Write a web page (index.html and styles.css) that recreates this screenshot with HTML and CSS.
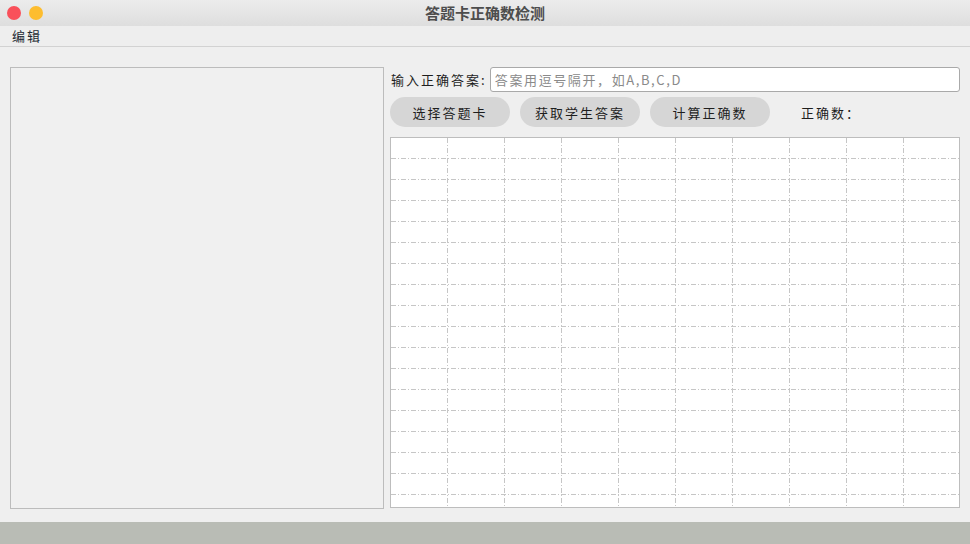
FILE: index.html
```html
<!DOCTYPE html>
<html lang="zh">
<head>
<meta charset="utf-8">
<title>答题卡正确数检测</title>
<link rel="stylesheet" href="styles.css">
</head>
<body>
<div class="window">
  <div class="titlebar">
    <div class="lights">
      <span class="light red"></span>
      <span class="light yellow"></span>
    </div>
    <div class="title">答题卡正确数检测</div>
  </div>
  <div class="menubar"><span class="menu-item">编辑</span></div>
  <div class="content">
    <div class="left-panel"></div>
    <div class="right">
      <div class="answer-row">
        <label class="answer-label">输入正确答案:</label>
        <input class="answer-input" type="text" placeholder="答案用逗号隔开，如A,B,C,D">
      </div>
      <div class="button-row">
        <button class="pill">选择答题卡</button>
        <button class="pill">获取学生答案</button>
        <button class="pill">计算正确数</button>
        <span class="count">正确数：</span>
      </div>
      <div class="table">
        <svg class="grid" width="568" height="369" viewBox="0 0 568 369" xmlns="http://www.w3.org/2000/svg">
          <g stroke="#c6c6c6" stroke-width="1" stroke-dasharray="5 2 1 2" fill="none">
            <line x1="56.5" y1="0" x2="56.5" y2="369"/>
            <line x1="113.5" y1="0" x2="113.5" y2="369"/>
            <line x1="170.5" y1="0" x2="170.5" y2="369"/>
            <line x1="227.5" y1="0" x2="227.5" y2="369"/>
            <line x1="284.5" y1="0" x2="284.5" y2="369"/>
            <line x1="341.5" y1="0" x2="341.5" y2="369"/>
            <line x1="398.5" y1="0" x2="398.5" y2="369"/>
            <line x1="455.5" y1="0" x2="455.5" y2="369"/>
            <line x1="512.5" y1="0" x2="512.5" y2="369"/>
            <line x1="0" y1="20.5" x2="568" y2="20.5"/>
            <line x1="0" y1="41.5" x2="568" y2="41.5"/>
            <line x1="0" y1="62.5" x2="568" y2="62.5"/>
            <line x1="0" y1="83.5" x2="568" y2="83.5"/>
            <line x1="0" y1="104.5" x2="568" y2="104.5"/>
            <line x1="0" y1="125.5" x2="568" y2="125.5"/>
            <line x1="0" y1="146.5" x2="568" y2="146.5"/>
            <line x1="0" y1="167.5" x2="568" y2="167.5"/>
            <line x1="0" y1="188.5" x2="568" y2="188.5"/>
            <line x1="0" y1="209.5" x2="568" y2="209.5"/>
            <line x1="0" y1="230.5" x2="568" y2="230.5"/>
            <line x1="0" y1="251.5" x2="568" y2="251.5"/>
            <line x1="0" y1="272.5" x2="568" y2="272.5"/>
            <line x1="0" y1="293.5" x2="568" y2="293.5"/>
            <line x1="0" y1="314.5" x2="568" y2="314.5"/>
            <line x1="0" y1="335.5" x2="568" y2="335.5"/>
            <line x1="0" y1="356.5" x2="568" y2="356.5"/>
          </g>
        </svg>
      </div>
    </div>
  </div>
  <div class="statusbar"></div>
</div>
</body>
</html>
```

FILE: styles.css
```css
* { box-sizing: border-box; }
html, body {
  margin: 0;
  padding: 0;
  width: 970px;
  height: 544px;
  overflow: hidden;
}
body {
  font-family: "Noto Sans CJK SC", "DejaVu Sans", sans-serif;
  background: #efefef;
  color: #222;
}
.window {
  display: flex;
  flex-direction: column;
  height: 544px;
}
.titlebar {
  height: 26px;
  background: linear-gradient(#ececec, #dedede);
  display: flex;
  align-items: center;
  position: relative;
}
.lights {
  display: flex;
  gap: 8px;
  padding-left: 7px;
}
.light {
  width: 14px;
  height: 14px;
  border-radius: 50%;
  display: block;
}
.red { background: #f9505a; }
.yellow { background: #fdbd2f; }
.title {
  position: absolute;
  left: 0;
  right: 0;
  top: 0;
  height: 26px;
  line-height: 26px;
  text-align: center;
  font-weight: bold;
  font-size: 15px;
  color: #4d4d4d;
  pointer-events: none;
}
.menubar {
  height: 21px;
  background: #eeeeee;
  border-bottom: 1px solid #d2d2d2;
  display: flex;
  align-items: center;
  padding-left: 12px;
}
.menu-item {
  font-size: 13px;
  letter-spacing: 2px;
  color: #222a33;
  line-height: 20px;
}
.content {
  flex: 1;
  display: flex;
  gap: 6px;
  padding: 20px 0 0 10px;
  background: #efefef;
}
.left-panel {
  flex: none;
  width: 374px;
  height: 442px;
  border: 1px solid #bcbcbc;
  background: #f0f0f0;
}
.right {
  flex: none;
  width: 570px;
  display: flex;
  flex-direction: column;
}
.answer-row {
  display: flex;
  align-items: center;
  height: 25px;
}
.answer-label {
  width: 100px;
  padding-left: 1px;
  font-size: 13px;
  letter-spacing: 2px;
  color: #1e1e1e;
  white-space: nowrap;
}
.answer-input {
  width: 471px;
  height: 25px;
  border: 1px solid #a9a9a9;
  border-radius: 3px;
  background: #fff;
  padding: 0 4px;
  font-family: "Noto Sans CJK SC", "DejaVu Sans", sans-serif;
  font-size: 13px;
  letter-spacing: 1.6px;
  outline: none;
}
.answer-input::placeholder {
  color: #8a8a8a;
}
.button-row {
  display: flex;
  align-items: center;
  gap: 10px;
  margin-top: 5px;
  height: 30px;
}
.pill {
  width: 120px;
  height: 30px;
  border: none;
  border-radius: 15px;
  background: #d6d6d6;
  font-family: "Noto Sans CJK SC", "DejaVu Sans", sans-serif;
  font-size: 13px;
  letter-spacing: 2px;
  color: #1e1e1e;
  padding: 0;
}
.count {
  margin-left: 21px;
  font-size: 13px;
  letter-spacing: 2px;
  color: #1e1e1e;
}
.table {
  margin-top: 10px;
  width: 570px;
  height: 371px;
  border: 1px solid #bdbdbd;
  background: #fff;
  overflow: hidden;
}
.grid { display: block; }
.statusbar {
  height: 22px;
  background: #b9bcb5;
}
```
